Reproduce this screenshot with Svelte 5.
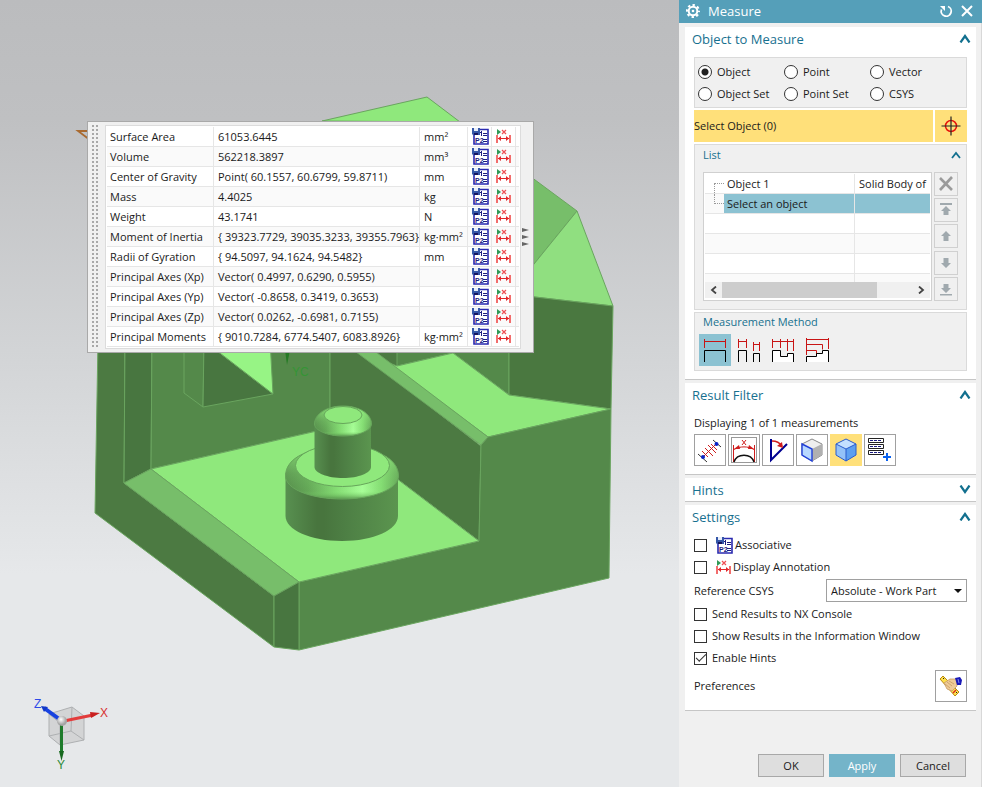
<script>
  const rows = [
    ['Surface Area', '61053.6445', 'mm²'],
    ['Volume', '562218.3897', 'mm³'],
    ['Center of Gravity', 'Point( 60.1557, 60.6799, 59.8711)', 'mm'],
    ['Mass', '4.4025', 'kg'],
    ['Weight', '43.1741', 'N'],
    ['Moment of Inertia', '{ 39323.7729, 39035.3233, 39355.7963}', 'kg·mm²'],
    ['Radii of Gyration', '{ 94.5097, 94.1624, 94.5482}', 'mm'],
    ['Principal Axes (Xp)', 'Vector( 0.4997, 0.6290, 0.5955)', ''],
    ['Principal Axes (Yp)', 'Vector( -0.8658, 0.3419, 0.3653)', ''],
    ['Principal Axes (Zp)', 'Vector( 0.0262, -0.6981, 0.7155)', ''],
    ['Principal Moments', '{ 9010.7284, 6774.5407, 6083.8926}', 'kg·mm²']
  ];
  const kinds = ['Object', 'Point', 'Vector', 'Object Set', 'Point Set', 'CSYS'];
  const methods = ['Free', 'Object pairs', 'Object chain', 'From reference'];
  const filters = ['Distance', 'Curve', 'Angle', 'Face', 'Body', 'More measurements'];
  const listButtons = ['Remove', 'Move to top', 'Move up', 'Move down', 'Move to bottom'];

  let kind = $state('Object');
  let method = $state(0);
  let filter = $state(4);
  let associative = $state(false);
  let annotation = $state(false);
  let toConsole = $state(false);
  let toWindow = $state(false);
  let hints = $state(true);
</script>

{#snippet expressionIcon()}
  <svg width="17" height="17" viewBox="0 0 17 17" aria-hidden="true">
    <path d="M2 1.500h14V16H2z" fill="#fff" stroke="#2a2ab0" stroke-width="1.600" />
    <path d="M0 0h8v7H1L0 6z" fill="#3557a8" />
    <path d="M2 0h4v3H2z" fill="#e8eefa" />
    <path d="M2 5h4v2H2z" fill="#14145e" />
    <path d="M9.500 3v5M8 4.500h2M11 5.500h4M11 7.500h4M11 11.500h4M11 13.500h4" stroke="#1c1c80" fill="none" />
    <text x="3" y="15" class="tiny">P2</text>
  </svg>
{/snippet}

{#snippet annotationIcon()}
  <svg width="15" height="15" viewBox="0 0 15 15" aria-hidden="true">
    <path d="M1 6v8M14 6v8" stroke="#f26d6d" stroke-width="2" />
    <path d="M2 9.500h11" stroke="#e3262b" />
    <path d="M5 7v5L2 9.500zM10 7v5l3-2.500z" fill="#e3262b" />
    <path d="M1 0l4 3-4 3z" fill="#2f9a56" />
    <path d="M6 1l4 4M10 1L6 5" stroke="#ee5055" stroke-width="1.200" />
  </svg>
{/snippet}

{#snippet chevron(down)}
  <svg width="12" height="9" viewBox="0 0 12 9" aria-hidden="true">
    <path d={down ? 'M1.500 0.500L6 7l4.500-6.500' : 'M1.500 8.500L6 2l4.500 6.500'} fill="none" stroke="#12708f" stroke-width="2.200" />
  </svg>
{/snippet}

{#snippet sectionHead(title, down = false)}
  <header class="section-head">
    <h2>{title}</h2>
    <button class="bare" aria-label="Toggle {title}">{@render chevron(down)}</button>
  </header>
{/snippet}

<div class="app">
  <main class="viewport">
    <svg class="scene" width="679" height="787" viewBox="0 0 679 787" role="img" aria-label="Solid model">
      <defs>
        <linearGradient id="cyl">
          <stop offset="0" stop-color="#589050" />
          <stop offset="0.28" stop-color="#48753e" />
          <stop offset="0.34" stop-color="#48753e" />
          <stop offset="0.55" stop-color="#4e8045" />
          <stop offset="1" stop-color="#5b954f" />
        </linearGradient>
        <linearGradient id="rim">
          <stop offset="0" stop-color="#568c4c" />
          <stop offset="0.2" stop-color="#64a757" />
          <stop offset="0.45" stop-color="#84dc73" />
          <stop offset="0.68" stop-color="#a8ff98" />
          <stop offset="0.85" stop-color="#84dc73" />
          <stop offset="1" stop-color="#65a658" />
        </linearGradient>
        <linearGradient id="rimShade" x2="0" y2="1">
          <stop offset="0" stop-color="#8fe87c" stop-opacity="0.8" />
          <stop offset="0.5" stop-color="#8fe87c" stop-opacity="0.2" />
          <stop offset="0.85" stop-color="#7fda6e" stop-opacity="0" />
          <stop offset="1" stop-color="#4d8543" stop-opacity="0.8" />
        </linearGradient>
        <radialGradient id="ball" cx="0.4" cy="0.35">
          <stop offset="0" stop-color="#fff" />
          <stop offset="1" stop-color="#a5a5a5" />
        </radialGradient>
      </defs>

      <g stroke="#6aa55f" stroke-width="1" stroke-linejoin="round">
        <path d="M322 121L427 97l33 25z" fill="#8fe87c" />
        <path d="M500 154l77 57-77 95z" fill="#77be6a" />
        <path d="M577 211l36 95-113-13v13z" fill="#90df80" />
        <path d="M98 340L95 513l179 134V596L124 483l1-143z" fill="#4c7a42" />
        <path d="M125 340l-1 143 27-14 1-129z" fill="#487640" />
        <path d="M152 340l-1 129 179-41v-88z" fill="#54894a" />
        <path d="M330 340v88l149 113 2-95-137-106z" fill="#4c7a42" />
        <path d="M350 335h47v45z" fill="#4c7a42" stroke="none" />
        <path d="M397 340v26l56-13 56 42v-55z" fill="#54894a" />
        <path d="M509 294v101l102 14 2-103-104-12z" fill="#4a7840" />
        <path d="M387 362l10 4 56-13 56 42 102 14-123 28z" fill="#8fe87c" />
        <path d="M340 340l141 105 7-8-128-97z" fill="#77be6a" />
        <path d="M488 437l123-28-2 169-310 72v-68l180-41 2-96z" fill="#54894a" />
        <path d="M151 469l179-41 149 113-180 41z" fill="#8fe87c" />
        <path d="M124 483l27-14 148 113-25 14z" fill="#77be6a" />
        <path d="M274 596l25-14v68l-25-3z" fill="#487640" />
        <path d="M184 340v53l19 14 1-67z" fill="#54894a" />
        <path d="M204 340l-1 67 70-13-70-54z" fill="#487640" />
        <path d="M203 340l70 54-3-54z" fill="#97f485" />
      </g>

      <path d="M285.500 473v43c0 14 25 25 56.500 25s56-11 56-25v-43z" fill="url(#cyl)" />
      <path d="M285.500 476c0-19 25-29 56.500-29s56.500 10 56.500 29c0 13-25 23-56.500 23s-56.500-10-56.500-23z" fill="url(#rim)" />
      <path d="M285.500 476c0-19 25-29 56.500-29s56.500 10 56.500 29c0 13-25 23-56.500 23s-56.500-10-56.500-23z" fill="url(#rimShade)" stroke="#67a65b" />
      <ellipse cx="342.500" cy="465.500" rx="47" ry="21" fill="#8fe87c" stroke="#67a65b" />
      <path d="M314.500 423v44c0 6 13 11 28.500 11s28-5 28-11v-44z" fill="url(#cyl)" />
      <path d="M314.500 424c0-10 12-18 28.500-18s28.500 8 28.500 18c0 6-12 12-28.500 12s-28.500-6-28.500-12z" fill="url(#rim)" />
      <path d="M314.500 424c0-10 12-18 28.500-18s28.500 8 28.500 18c0 6-12 12-28.500 12s-28.500-6-28.500-12z" fill="url(#rimShade)" stroke="#67a65b" />
      <ellipse cx="343" cy="415" rx="19" ry="8.500" fill="#8fe87c" stroke="#67a65b" />

      <path d="M285 350h5l-3 15z" fill="#257a25" />
      <text x="292" y="376" class="axis" fill="#359535">YC</text>
      <path d="M90 131H78l12 9" fill="none" stroke="#a96a30" stroke-width="1.800" />

      <g stroke="#aeb0b2" fill="#d3d4d5">
        <path d="M49 714l23-7 12 9v24l-24 5-11-9z" />
        <path d="M49 736l22-5 13 9M71 731l1-24M49 714l11 9 24-7M60 723v22" fill="none" />
      </g>
      <path d="M62 721L44 708" stroke="#1742e0" stroke-width="4" />
      <path d="M41 706l7 1-4 5z" fill="#1238c8" />
      <path d="M64 721l29-6" stroke="#e33c3c" stroke-width="3" />
      <path d="M90 712l10 1-9 5z" fill="#c92020" />
      <path d="M61.500 724v30" stroke="#1e7b2b" stroke-width="3" />
      <path d="M59 751h5l-2.500 10z" fill="#17681f" />
      <circle cx="62" cy="721" r="5" fill="url(#ball)" />
      <text x="34" y="708" class="axis" fill="#2d49e8">Z</text>
      <text x="100" y="717" class="axis" fill="#d83232">X</text>
      <text x="57" y="769" class="axis" fill="#2c8a38">Y</text>
    </svg>

    <section class="results" aria-label="Measurement results">
      <div class="grip"></div>
      <div class="results-box">
        <table>
          <tbody>
            {#each rows as [name, value, unit]}
              <tr>
                <td class="name">{name}</td>
                <td class="value">{value}</td>
                <td class="unit">{unit}</td>
                <td class="tool"><button class="bare" aria-label="Create expression for {name}">{@render expressionIcon()}</button></td>
                <td class="tool"><button class="bare" aria-label="Annotate {name}">{@render annotationIcon()}</button></td>
                <td class="rest"></td>
              </tr>
            {/each}
          </tbody>
        </table>
      </div>
      <button class="bare expand" aria-label="Expand">
        <svg width="8" height="20" viewBox="0 0 8 20" aria-hidden="true">
          <path d="M0 1l7 2-7 2zM0 8l7 2-7 2zM0 15l7 2-7 2z" fill="#666" />
        </svg>
      </button>
    </section>
  </main>

  <aside class="panel">
    <header class="titlebar">
      <svg width="14" height="14" viewBox="0 0 14 14" aria-hidden="true">
        <circle cx="7" cy="7" r="4.300" fill="none" stroke="#fff" stroke-width="2" />
        <circle cx="7" cy="7" r="6" fill="none" stroke="#fff" stroke-width="2" stroke-dasharray="2.400 2.312" stroke-dashoffset="1.200" />
        <circle cx="7" cy="7" r="1.300" fill="#fff" />
      </svg>
      <h1>Measure</h1>
      <button class="bare" aria-label="Reset">
        <svg width="14" height="14" viewBox="0 0 14 14" aria-hidden="true">
          <path d="M9 2.500a5 5 0 1 1-6.500 3" fill="none" stroke="#fff" stroke-width="1.800" />
          <path d="M1 2h5v5z" fill="#fff" />
        </svg>
      </button>
      <button class="bare" aria-label="Close">
        <svg width="12" height="12" viewBox="0 0 12 12" aria-hidden="true">
          <path d="M1 1l10 10M11 1L1 11" stroke="#fff" stroke-width="2" />
        </svg>
      </button>
    </header>

    <div class="sections">
      <section class="card">
        {@render sectionHead('Object to Measure')}
        <div class="stack">
          <div class="group kinds">
            {#each kinds as k}
              <label><input type="radio" name="kind" value={k} bind:group={kind} />{k}</label>
            {/each}
          </div>

          <div class="select-row">
            <span>Select Object (0)</span>
            <button class="bare" aria-label="Select Object">
              <svg width="20" height="20" viewBox="0 0 20 20" aria-hidden="true">
                <circle cx="10" cy="10" r="5.500" fill="none" stroke="#e8140c" stroke-width="1.500" />
                <path d="M10 0.500v19M0.500 10h19" stroke="#222" stroke-width="1.200" />
              </svg>
            </button>
          </div>

          <div class="group list">
            <div class="sub-head">
              <h3>List</h3>
              <button class="bare" aria-label="Toggle List">
                <svg width="10" height="8" viewBox="0 0 10 8" aria-hidden="true"><path d="M1 7l4-5 4 5" fill="none" stroke="#12708f" stroke-width="1.800" /></svg>
              </button>
            </div>
            <div class="list-body">
              <div class="tree">
                <table>
                  <tbody>
                    <tr><td class="branch"></td><td class="entry">Object 1</td><td class="desc">Solid Body of</td></tr>
                    <tr class="picked"><td class="branch last"></td><td class="entry">Select an object</td><td></td></tr>
                    <tr><td class="branch none"></td><td></td><td></td></tr>
                    <tr><td class="branch none"></td><td></td><td></td></tr>
                    <tr><td class="branch none"></td><td></td><td></td></tr>
                    <tr class="cut"><td class="branch none"></td><td></td><td></td></tr>
                  </tbody>
                </table>
                <div class="scroll">
                  <button class="bare" aria-label="Scroll left">
                    <svg width="7" height="8" viewBox="0 0 7 8" aria-hidden="true"><path d="M6 0.500L2 4l4 3.500" fill="none" stroke="#444" stroke-width="1.800" /></svg>
                  </button>
                  <div class="track"><div class="thumb"></div></div>
                  <button class="bare" aria-label="Scroll right">
                    <svg width="7" height="8" viewBox="0 0 7 8" aria-hidden="true"><path d="M1 0.500L5 4 1 7.500" fill="none" stroke="#444" stroke-width="1.800" /></svg>
                  </button>
                </div>
              </div>
              <div class="list-tools">
                {#each listButtons as label, i}
                  <button aria-label={label} disabled>
                    <svg width="16" height="16" viewBox="0 0 16 16" aria-hidden="true">
                      {#if i === 0}
                        <path d="M2 2l12 12M14 1L2 14" stroke="#9b9b9b" stroke-width="2.600" />
                      {:else if i === 1}
                        <path d="M2 3h12V1H2zM8 4l5 5h-2.500v4h-5V9H3z" fill="#a0a9ae" />
                      {:else if i === 2}
                        <path d="M8 3l5 5h-2.500v5h-5V8H3z" fill="#a0a9ae" />
                      {:else if i === 3}
                        <path d="M8 13l5-5h-2.500V3h-5v5H3z" fill="#a0a9ae" />
                      {:else}
                        <path d="M8 12l5-5h-2.500V3h-5v4H3zM2 13h12v1.500H2z" fill="#a0a9ae" />
                      {/if}
                    </svg>
                  </button>
                {/each}
              </div>
            </div>
          </div>

          <div class="group methods">
            <h3>Measurement Method</h3>
            <div class="method-row">
              {#each methods as label, i}
                <button class="bare" class:on={method === i} aria-label={label} onclick={() => (method = i)}>
                  <svg width="26" height="26" viewBox="0 0 26 26" fill="none" aria-hidden="true">
                    {#if i === 0}
                      <path d="M2.500 2v9M23.500 2v9M2 4.500h22" stroke="#c81414" />
                      <path d="M2.500 25V13.500h21V25" stroke="#000" />
                    {:else if i === 1}
                      <path d="M2.500 2v9M10.500 2v9M2 4.500h9M17.500 5v9M23.500 5v9M17 7.500h7" stroke="#c81414" />
                      <path d="M2.500 25V13.500h8V25M17.500 25v-8.500h6V25" stroke="#000" />
                    {:else if i === 2}
                      <path d="M3 14h7v6h8v-3h6v8H3z" fill="#fff" />
                      <path d="M2.500 2v9M10.500 2v9M17.500 2v12M23.500 2v12M2 4.500h22" stroke="#c81414" />
                      <path d="M2.500 25V13.500h8v6h7v-3h6V25" stroke="#000" />
                    {:else}
                      <path d="M2 20h10v-3h6v-3h6v11H2z" fill="#fff" />
                      <path d="M2.500 1v17M24.500 1v11M2 2.500h22M2 7.500h16.500v5M2 13.500h10.500v4" stroke="#c81414" />
                      <path d="M2.500 25v-5.500h10v-3h6v-3h6V25" stroke="#000" />
                    {/if}
                  </svg>
                </button>
              {/each}
            </div>
          </div>
        </div>
      </section>

      <section class="card">
        {@render sectionHead('Result Filter')}
        <div class="stack filter">
          <p>Displaying 1 of 1 measurements</p>
          <div class="filter-row">
            {#each filters as label, i}
              <button class:on={filter === i} aria-label={label} onclick={() => (filter = i)}>
                <svg width="28" height="28" viewBox="0 0 28 28" fill="none" aria-hidden="true">
                  {#if i === 0}
                    <path d="M17 4l8 7M2 18l9 8" stroke="#333" />
                    <path d="M7 21L20 8" stroke="#cf1d1d" />
                    <path d="M9 12l8 8M12 9l8 8M15 8l6 6M6 15l6 6" stroke="#cf1d1d" />
                    <circle cx="20.500" cy="8" r="2" fill="#0a23c8" /><circle cx="7" cy="21" r="2" fill="#0a23c8" />
                  {:else if i === 1}
                    <rect x="1.500" y="1.500" width="25" height="25" stroke="#333" stroke-dasharray="1 1" />
                    <path d="M3.500 9v17M24.500 9v17M4 13.500C10 10 18 10 24 13.500M12 4l4 5M16 4l-4 5" stroke="#cf1d1d" />
                    <path d="M4 13l5-4 1 4zM24 13l-5-4-1 4z" fill="#cf1d1d" />
                    <path d="M4 26c3-9 17-9 20 0" stroke="#111" stroke-width="1.400" />
                  {:else if i === 2}
                    <path d="M7 3v21L23 8" stroke="#000090" stroke-width="2" />
                    <path d="M8 5c5 0 8 2 10 5" stroke="#cf1d1d" stroke-width="1.300" /><path d="M13 10l6 2-1-6z" fill="#cf1d1d" />
                  {:else if i === 3}
                    <path d="M4 8l10-5 10 5v11l-10 6-10-6z" fill="#eee" stroke="#888" />
                    <path d="M14 13l10-5v11l-10 6z" fill="#b0b0b0" />
                    <path d="M4 8l10 5v12L4 19z" fill="#b8d8ff" stroke="#2140d8" stroke-width="1.400" />
                  {:else if i === 4}
                    <path d="M4 8l10-5 10 5v11l-10 6-10-6z" fill="#c3e0ff" />
                    <path d="M4 8l10 5v12L4 19z" fill="#94c2f8" />
                    <path d="M14 13l10-5v11l-10 6z" fill="#5c9ff0" />
                    <path d="M4 8l10-5 10 5v11l-10 6-10-6zM4 8l10 5 10-5M14 13v12" stroke="#2a5ccc" />
                  {:else}
                    <path d="M2.500 2.500h15v4h-15zM2.500 8.500h15v4h-15zM2.500 14.500h15v4h-15z" stroke="#222" />
                    <path d="M4 4.500h12M4 10.500h12M4 16.500h12" stroke="#1c1c80" stroke-dasharray="3 1" />
                    <path d="M21 17v8M17 21h8" stroke="#0a62f0" stroke-width="2" />
                  {/if}
                </svg>
              </button>
            {/each}
          </div>
        </div>
      </section>

      <section class="card hints">
        {@render sectionHead('Hints', true)}
      </section>

      <section class="card">
        {@render sectionHead('Settings')}
        <div class="settings">
          <label class="wide"><input type="checkbox" bind:checked={associative} />{@render expressionIcon()}Associative</label>
          <label class="wide"><input type="checkbox" bind:checked={annotation} />{@render annotationIcon()}Display Annotation</label>
          <div class="field">
            <label for="csys">Reference CSYS</label>
            <span class="combo">
              <select id="csys"><option>Absolute - Work Part</option><option>WCS</option></select>
              <svg width="8" height="4" viewBox="0 0 8 4" aria-hidden="true"><path d="M0 0h8L4 4z" fill="#111" /></svg>
            </span>
          </div>
          <label><input type="checkbox" bind:checked={toConsole} />Send Results to NX Console</label>
          <label><input type="checkbox" bind:checked={toWindow} />Show Results in the Information Window</label>
          <label><input type="checkbox" bind:checked={hints} />Enable Hints</label>
          <div class="field prefs">
            <span>Preferences</span>
            <button class="square" aria-label="Preferences">
              <svg width="24" height="24" viewBox="0 0 24 24" aria-hidden="true">
                <path d="M1 5l3-3 16 16-4 4z" fill="#ffe04a" stroke="#b98a16" />
                <path d="M5 9l6-4h7v7l-5 5-5-2z" fill="#eecb98" stroke="#c79a62" stroke-width="0.800" />
                <path d="M6 10l5 4M8 8l5 4M10 7l5 3" stroke="#c79a62" stroke-width="0.800" />
                <path d="M16 4l5-1 2 3-1 5h-4z" fill="#1a1ab8" />
                <path d="M19 5l1 4" stroke="#7d8df0" />
                <path d="M14 19l3-3" stroke="#d92b1c" stroke-width="1.400" />
                <path d="M4 4l1 1M17 19l1-1" stroke="#222" />
              </svg>
            </button>
          </div>
        </div>
      </section>
    </div>

    <footer>
      <button>OK</button>
      <button class="primary">Apply</button>
      <button>Cancel</button>
    </footer>
  </aside>
</div>

<style>
  :global(body) {
    margin: 0;
  }
  .app {
    display: flex;
    min-height: 100vh;
    font: 11px/16px "Open Sans", "Noto Sans", sans-serif;
    color: #1a1a1a;
  }
  .app * {
    box-sizing: border-box;
  }
  h1, h2, h3, p {
    margin: 0;
    font-weight: 400;
  }
  button, select {
    font: inherit;
    color: inherit;
    padding: 0;
  }
  svg {
    display: block;
    flex: none;
  }
  .bare {
    display: grid;
    place-items: center;
    border: 0;
    background: none;
  }
  .tiny {
    font: bold 7px "Liberation Sans", sans-serif;
    fill: #1c1c80;
  }
  .axis {
    font: 12px "Liberation Sans", sans-serif;
  }

  .viewport {
    position: relative;
    flex: 1;
    min-width: 0;
    overflow: hidden;
    background: linear-gradient(#bbbcbe 0%, #bfc0c2 15%, #d3d5d7 46%, #e6e8ea 73%, #e6e8ea 100%);
  }
  .scene {
    position: absolute;
    inset: 0 auto auto 0;
  }
  .results {
    position: absolute;
    left: 87px;
    top: 121px;
    display: flex;
    padding: 3px 2px;
    border: 1px solid #a9a9a9;
    background: #f0f0f0;
  }
  .grip {
    width: 8px;
    margin-right: 7px;
    background: conic-gradient(#a8a8a8 25%, #f0f0f0 0) 0 0 / 4px 4px;
  }
  .results-box {
    padding: 1px;
    border: 1px solid #dcdcdc;
    background: #fff;
  }
  table {
    border-collapse: separate;
    border-spacing: 0;
    table-layout: fixed;
  }
  td {
    height: 20px;
    padding: 0 0 0 4px;
    border-right: 1px solid #e6e6e6;
    border-bottom: 1px solid #e6e6e6;
    white-space: nowrap;
    overflow: hidden;
  }
  tr:nth-child(even) td {
    background: #fafafa;
  }
  .name { width: 107px; padding-left: 3px; }
  .value { width: 206px; }
  .unit { width: 48px; }
  .tool { width: 24px; }
  td.tool { padding-left: 4px; }
  td.rest { width: 3px; padding: 0; border-right: 0; }
  .expand {
    align-self: center;
    width: 10px;
  }

  .panel {
    display: flex;
    flex-direction: column;
    width: 303px;
    background: #f0f0f0;
    border-right: 1px solid #d8d8d8;
  }
  .titlebar {
    display: flex;
    align-items: center;
    gap: 8px;
    height: 23px;
    padding: 0 9px 2px 7px;
    margin-right: -1px;
    background: #559fb9;
    color: #fff;
  }
  .titlebar h1 {
    flex: 1;
    font-size: 13px;
  }
  .sections {
    display: grid;
    gap: 3px;
    padding: 4px 5px 0 6px;
  }
  .card {
    background: #fff;
    border-bottom: 1px solid #c6c6c6;
  }
  .section-head {
    display: flex;
    align-items: center;
    justify-content: space-between;
    height: 25px;
    padding: 0 5px 2px 7px;
    color: #17708f;
  }
  .hints .section-head {
    height: 23px;
    padding-bottom: 0;
  }
  h2 {
    font-size: 13px;
  }
  h3 {
    font-size: 11px;
    color: #17708f;
  }
  .stack {
    display: grid;
    gap: 2px;
    padding: 5px 9px 8px;
  }
  .group {
    background: #f0f0f0;
    border: 1px solid #dadada;
  }
  .kinds {
    display: grid;
    grid-template-columns: repeat(3, 86px);
    padding: 3px 3px 2px;
  }
  .kinds label, .settings > label {
    display: flex;
    align-items: center;
    gap: 5px;
    height: 22px;
    white-space: nowrap;
  }
  input {
    appearance: none;
    flex: none;
    width: 13px;
    height: 13px;
    margin: 0;
    border: 1px solid #333;
    background: #fff;
  }
  input[type='radio'] {
    width: 14px;
    height: 14px;
    border-radius: 50%;
  }
  input[type='radio']:checked {
    background: radial-gradient(circle, #222 0 3px, #fff 4px);
  }
  input[type='checkbox'] {
    display: grid;
    place-items: center;
  }
  input[type='checkbox']:checked::after {
    content: '';
    width: 9px;
    height: 4px;
    border: solid #333;
    border-width: 0 0 1px 1px;
    rotate: -45deg;
    margin-bottom: 3px;
  }
  .select-row {
    display: grid;
    grid-template-columns: 1fr 32px;
    gap: 2px;
    height: 32px;
  }
  .select-row > * {
    background: #ffe07a;
  }
  .select-row span {
    line-height: 32px;
  }
  .list {
    padding: 0 8px 8px;
  }
  .sub-head {
    display: flex;
    align-items: center;
    justify-content: space-between;
    height: 20px;
    margin: 0 -3px 7px 0;
  }
  .list-body {
    display: flex;
    gap: 2px;
  }
  .tree {
    flex: 1;
    min-width: 0;
    padding: 1px 1px 2px;
    border: 1px solid #d0d0d0;
    background: #fff;
  }
  .tree table {
    width: 100%;
  }
  .tree .branch {
    position: relative;
    width: 19px;
    border-right: 0;
  }
  .tree .branch::before {
    content: '';
    position: absolute;
    inset: 9px 0 0 9px;
    border: dotted #999;
    border-width: 1px 0 0 1px;
  }
  .tree .branch.last::before {
    inset: 0 0 9px 9px;
    border-width: 0 0 1px 1px;
  }
  .tree .branch.none::before {
    display: none;
  }
  .tree .entry {
    width: 131px;
    padding-left: 3px;
  }
  .tree td:last-child {
    border-right: 0;
  }
  .tree .picked td:not(.branch) {
    background: #8cc2d2;
  }
  .tree .cut td {
    height: 8px;
    border-bottom: 0;
  }
  .scroll {
    display: flex;
    height: 16px;
    background: #f0f0f0;
  }
  .scroll button {
    width: 17px;
  }
  .track {
    flex: 1;
  }
  .thumb {
    width: 81%;
    height: 100%;
    background: #cdcdcd;
  }
  .list-tools {
    display: grid;
    gap: 2px;
  }
  .list-tools button {
    display: grid;
    place-items: center;
    width: 24px;
    height: 24px;
    border: 1px solid #d0d0d0;
    background: #f0f0f0;
  }
  .methods {
    padding: 1px 4px 4px;
  }
  .methods h3 {
    padding-left: 4px;
    margin-bottom: 4px;
  }
  .method-row, .filter-row {
    display: flex;
    gap: 2px;
  }
  .method-row button {
    width: 32px;
    height: 32px;
  }
  .method-row .on {
    background: #8cc2d2;
  }
  .filter {
    gap: 0;
  }
  .filter p {
    line-height: 19px;
    margin-bottom: 2px;
  }
  .filter-row button, .square {
    display: grid;
    place-items: center;
    width: 32px;
    height: 32px;
    border: 1px solid #a0a0a0;
    background: #fff;
  }
  .filter-row .on {
    border-color: #ffe07a;
    background: #ffe07a;
  }
  .settings {
    padding: 4px 9px 7px;
  }
  .settings .wide {
    gap: 2px;
  }
  .settings .wide input {
    margin-right: 7px;
  }
  .field {
    display: flex;
    align-items: center;
    justify-content: space-between;
    height: 25px;
  }
  .prefs {
    height: 34px;
  }
  .combo {
    display: grid;
    align-items: center;
    width: 141px;
  }
  .combo > * {
    grid-area: 1 / 1;
  }
  .combo svg {
    justify-self: end;
    margin-right: 5px;
    pointer-events: none;
  }
  select {
    appearance: none;
    width: 100%;
    height: 23px;
    padding-left: 4px;
    border: 1px solid #a0a0a0;
    border-radius: 0;
    background: #fff;
  }
  footer {
    display: flex;
    justify-content: flex-end;
    gap: 5px;
    margin-top: auto;
    padding: 12px 15px 10px;
  }
  footer button {
    width: 66px;
    height: 23px;
    border: 1px solid #a8a8a8;
    background: #dedede;
  }
  footer .primary {
    border-color: #74b4c9;
    background: #74b4c9;
    color: #fff;
  }
</style>
